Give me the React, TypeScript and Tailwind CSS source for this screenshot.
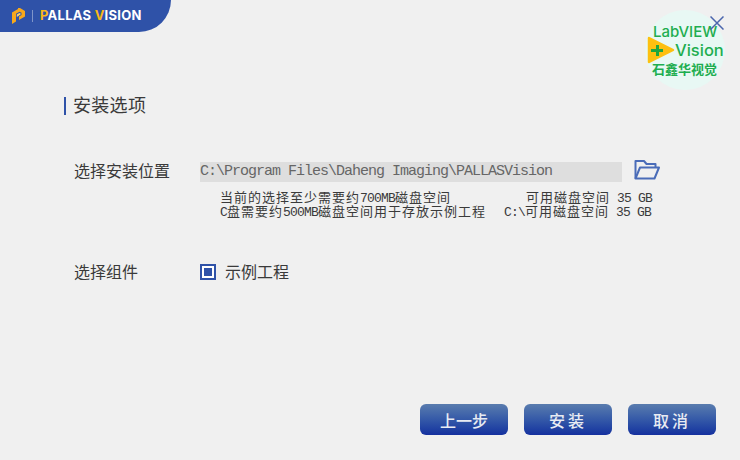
import React from "react";

const cjk = { fontFamily: '"Noto Sans CJK SC", sans-serif' };
const mono = '"Liberation Mono", "Noto Sans CJK SC", monospace';

function L({ children }: { children: React.ReactNode }) {
  return <span className="tracking-[-0.8px]">{children}</span>;
}

function Btn({ children }: { children: React.ReactNode }) {
  return (
    <button className="w-[88px] h-[31px] rounded-[6px] bg-gradient-to-b from-[#5a7cae] to-[#16309f] text-[#e8ebf2] text-[16px] font-medium flex items-center justify-center">
      {children}
    </button>
  );
}

export default function App() {
  return (
    <div className="relative w-[740px] h-[460px] overflow-hidden bg-[#f0f0f0] flex flex-col text-[#3a3a3a]" style={cjk}>
      <div className="w-[171px] h-[32px] bg-[#2f52a8] rounded-br-[32px] flex items-center pl-[12px]">
        <svg width="13" height="16" viewBox="0 0 13 16">
          <path d="M0 4.5 L6 1 L6 0 L8 0 L13 3 L13 8.5 L7 12 L7 8.5 L9.5 7 L9.5 4.8 L7.5 3.7 L4 5.8 L4 13.5 L0 16 Z" fill="#f7a81b" />
          <path d="M4.8 6.6 L7.5 5 L8.6 5.6 L8.6 6.6 L4.8 9 Z" fill="#fcd36a" />
        </svg>
        <div className="w-px h-[12px] bg-[#7f95c9] ml-[7px]" />
        <div className="ml-[7px] text-[13px] font-bold text-white tracking-[0.25px] whitespace-pre" style={{ fontFamily: "Inter, sans-serif" }}>
          <span className="text-[#fbb917]">P</span>ALLAS <span className="text-[#fbb917]">V</span>ISION
        </div>
      </div>

      <div className="absolute left-[645px] top-[10px] w-[80px] h-[80px] rounded-full bg-[#e8f8f4]">
        <div className="absolute left-[8px] top-[13px] text-[15px] leading-[18px] font-medium text-[#1eae50] whitespace-nowrap" style={{ fontFamily: "Inter, sans-serif" }}>LabVIEW</div>
        <svg className="absolute left-[2px] top-[26px]" width="28" height="28" viewBox="0 0 28 28">
          <path d="M2 2 L26 14 L2 26 Z" fill="#fdc010" stroke="#fdc010" strokeWidth="2.5" strokeLinejoin="round" />
          <path d="M4 13 H9 V9 H12 V13 H16 V16 H12 V20 H9 V16 H4 Z" fill="#1fa63f" />
        </svg>
        <div className="absolute left-[30px] top-[30px] text-[16.5px] leading-[20px] font-medium text-[#1eae50]" style={{ fontFamily: "Inter, sans-serif" }}>Vision</div>
        <div className="absolute left-[7px] top-[51px] text-[13px] leading-[16px] font-bold text-[#1eae50] whitespace-nowrap">石鑫华视觉</div>
      </div>
      <svg className="absolute left-[710px] top-[16px]" width="14" height="14" viewBox="0 0 14 14" fill="none" stroke="#4a66ad" strokeWidth="1.5">
        <path d="M0.5 0.5 L13.5 13.5 M13.5 0.5 L0.5 13.5" />
      </svg>

      <div className="flex flex-col flex-1 pl-[64px] pr-[24px]">
        <div className="flex items-center h-[18px] mt-[65px] border-l-[2px] border-[#2f52a8] pl-[7px] pb-[5px] text-[18px] leading-[18px] tracking-[0.3px]">安装选项</div>

        <div className="flex items-center mt-[45px] pl-[10px] h-[24px]">
          <div className="w-[126px] text-[16px] pb-[5px]">选择安装位置</div>
          <div className="w-[422px] h-[20px] bg-[#dedede] text-[#666666] text-[15px] tracking-[-1px] leading-[19px] whitespace-pre" style={{ fontFamily: mono }}>
            C:\Program Files\Daheng Imaging\PALLASVision
          </div>
          <svg className="ml-[12px] mb-[4px]" width="26" height="22" viewBox="0 0 26 22" fill="none" stroke="#4a6cb8" strokeWidth="2" strokeLinejoin="round">
            <path d="M1.5 19.5 V2 H10 L12.5 5 H21.5 V8" />
            <path d="M1.5 19.5 L6 8.5 H25 L20.5 19.5 Z" />
          </svg>
        </div>

        <div className="ml-[156px] mt-[8px] w-[432px] text-[13px] tracking-[1px] leading-[14px] whitespace-pre text-[#3a3a3a]" style={{ fontFamily: mono }}>
          <div className="flex justify-between h-[14px]">
            <span>当前的选择至少需要约<L>700MB</L>磁盘空间</span>
            <span>可用磁盘空间<L> 35 GB</L></span>
          </div>
          <div className="flex justify-between h-[14px] pr-px">
            <span><L>C</L>盘需要约<L>500MB</L>磁盘空间用于存放示例工程</span>
            <span><L>C:\</L>可用磁盘空间<L> 35 GB</L></span>
          </div>
        </div>

        <div className="flex items-center mt-[40px] pl-[10px] h-[24px]">
          <div className="w-[126px] text-[16px] pb-[2px]">选择组件</div>
          <div className="w-[16px] h-[16px] border-[2px] border-[#2f52a8] bg-white p-[2px]">
            <div className="w-full h-full bg-[#2f52a8]" />
          </div>
          <div className="ml-[9px] text-[16px] pb-[2px]">示例工程</div>
        </div>

        <div className="flex justify-end gap-[16px] mt-auto mb-[25px]">
          <Btn>上一步</Btn>
          <Btn><span className="tracking-[3px]">安装</span></Btn>
          <Btn><span className="tracking-[3px]">取消</span></Btn>
        </div>
      </div>
    </div>
  );
}
